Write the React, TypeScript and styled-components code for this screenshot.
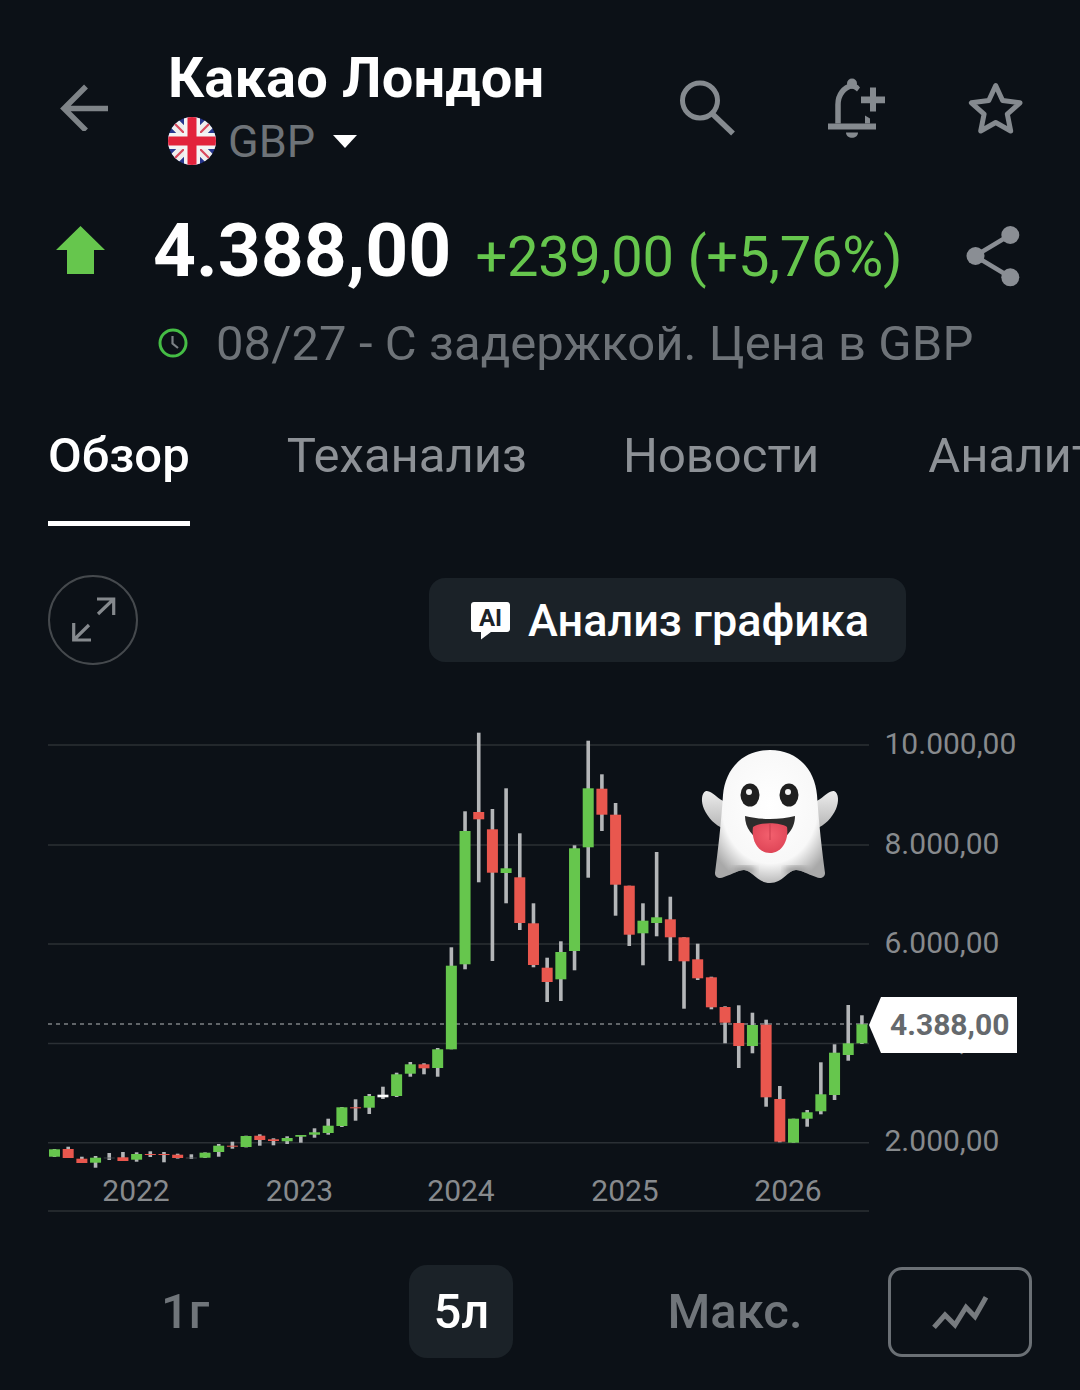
import React from 'react'
import styled, { createGlobalStyle } from 'styled-components'

type Tone = 'g' | 'r' | 'w' | 'd'

// wick top, wick bottom, body top, body bottom, tone (screen px, the chart viewBox uses page coordinates)
const candles: [number, number, number, number, Tone][] = [
  [1149, 1157, 1149.3, 1156.7, 'g'],
  [1146.7, 1158, 1149, 1158, 'r'],
  [1156.7, 1163, 1158.7, 1163, 'r'],
  [1156, 1167.7, 1157.7, 1162.7, 'g'],
  [1153, 1160, 1157.6, 1158.4, 'd'],
  [1152, 1161, 1157.3, 1161, 'r'],
  [1152.3, 1161.7, 1154, 1159.7, 'g'],
  [1151.3, 1157, 1154, 1155, 'r'],
  [1152, 1162.3, 1154, 1155, 'r'],
  [1153.7, 1158.6, 1154.7, 1158, 'r'],
  [1154.3, 1159, 1157.6, 1158.4, 'd'],
  [1152.4, 1158, 1152.7, 1157.7, 'g'],
  [1144, 1156.7, 1145.7, 1152, 'g'],
  [1141.7, 1148.7, 1145.7, 1146.7, 'r'],
  [1135.7, 1147.4, 1136, 1147, 'g'],
  [1134.3, 1145.7, 1135.7, 1140, 'r'],
  [1138.3, 1145.3, 1139.3, 1141, 'r'],
  [1136.3, 1144, 1138, 1141.3, 'g'],
  [1135, 1142.7, 1135, 1136.7, 'g'],
  [1128.3, 1137.7, 1132.3, 1134.7, 'g'],
  [1118.7, 1134.7, 1125.7, 1133, 'g'],
  [1107, 1127, 1107.3, 1126, 'g'],
  [1099.3, 1120.7, 1107.3, 1108.3, 'r'],
  [1094, 1114, 1096, 1107.7, 'g'],
  [1086.7, 1099, 1094.7, 1097.3, 'w'],
  [1072.7, 1097, 1074.3, 1096, 'g'],
  [1062, 1076.7, 1064.3, 1073.7, 'g'],
  [1063.3, 1074.3, 1064.3, 1068.3, 'r'],
  [1048, 1076.7, 1049.3, 1068, 'g'],
  [947.3, 1049.3, 965.7, 1049.3, 'g'],
  [811.3, 969.3, 831, 964.3, 'g'],
  [732.7, 882.3, 812, 819.3, 'r'],
  [809, 961, 829.3, 872.7, 'r'],
  [788.3, 903.3, 868.3, 873, 'g'],
  [833.3, 930, 877.3, 923, 'r'],
  [903.3, 967.3, 923.3, 965, 'r'],
  [957.7, 1002, 967.7, 982, 'r'],
  [941.3, 1001, 952, 979.3, 'g'],
  [845.3, 970.3, 848.3, 951, 'g'],
  [740.7, 877.7, 788.3, 847.3, 'g'],
  [774.3, 831, 788.7, 814.7, 'r'],
  [803, 915.7, 814.7, 884.7, 'r'],
  [885.7, 946, 885.7, 934.7, 'r'],
  [903.3, 965.3, 920.7, 933.3, 'g'],
  [852, 936.3, 917.3, 923, 'g'],
  [896.7, 961, 919.3, 937.3, 'r'],
  [937.3, 1008.7, 937.3, 961.3, 'r'],
  [943.7, 980, 959.3, 978.3, 'r'],
  [976.7, 1009.3, 977.3, 1007.3, 'r'],
  [1006.3, 1043.3, 1007, 1022.7, 'r'],
  [1005.3, 1068, 1023, 1046, 'r'],
  [1012.7, 1053.3, 1025, 1046, 'g'],
  [1019.7, 1106.7, 1024.7, 1097.3, 'r'],
  [1086, 1142.3, 1099, 1141.7, 'r'],
  [1118.7, 1142.7, 1118.7, 1142.7, 'g'],
  [1110, 1126.7, 1112.3, 1118.7, 'g'],
  [1062.3, 1114.3, 1094.3, 1111.3, 'g'],
  [1044.3, 1100, 1052.7, 1095, 'g'],
  [1005, 1060.7, 1043.3, 1055, 'g'],
  [1015.3, 1044, 1024.3, 1043.3, 'g'],
]

const toneColor: Record<Tone, string> = {
  g: '#66c64d',
  r: '#e9574e',
  w: '#ffffff',
  d: '#4a4f54',
}

const gridLines = [745, 845, 944, 1043.5, 1142.7, 1211]
const yLabels: [string, number][] = [
  ['10.000,00', 754],
  ['8.000,00', 854],
  ['6.000,00', 953],
  ['4.000,00', 1050],
  ['2.000,00', 1151],
]
const xLabels: [string, number][] = [
  ['2022', 136],
  ['2023', 299.5],
  ['2024', 461],
  ['2025', 625],
  ['2026', 788],
]

const GlobalStyle = createGlobalStyle`
  html, body {
    margin: 0;
    padding: 0;
    background: #0c1117;
  }
  body {
    font-family: Roboto, "Liberation Sans", sans-serif;
  }
`

const Screen = styled.div`
  width: 1080px;
  height: 1390px;
  overflow: hidden;
  background: #0c1117;
`

const TopBar = styled.header`
  display: flex;
  align-items: center;
  height: 119px;
  padding: 46px 54px 0 58px;
`

const BackIcon = styled.svg`
  width: 50px;
  height: 50px;
  margin-right: 60px;
  flex: none;
`

const TitleBlock = styled.div`
  display: flex;
  flex-direction: column;
`

const Title = styled.h1`
  margin: 0;
  font-size: 56px;
  line-height: 64px;
  font-weight: 700;
  color: #fff;
  letter-spacing: 0.15px;
`

const Exchange = styled.div`
  display: flex;
  align-items: center;
  height: 48px;
  margin-top: 7px;
  font-size: 45px;
  color: #6e7378;
`

const FlagIcon = styled.svg`
  width: 48px;
  height: 48px;
  margin-right: 12px;
`

const Caret = styled.span`
  width: 0;
  height: 0;
  margin-left: 18px;
  border-left: 12px solid transparent;
  border-right: 12px solid transparent;
  border-top: 13px solid #fff;
`

const TopIcons = styled.div`
  display: flex;
  align-items: center;
  margin-left: auto;
`

const TopIcon = styled.svg<{ $gap?: number }>`
  width: 60px;
  height: 60px;
  margin-left: ${p => p.$gap || 0}px;
  overflow: visible;
`

const PriceRow = styled.div`
  display: flex;
  align-items: center;
  height: 100px;
  margin-top: 35px;
  padding: 0 54px 0 56px;
`

const UpArrow = styled.svg`
  width: 49px;
  height: 48px;
  margin-right: 48px;
  flex: none;
`

const PriceValues = styled.div`
  display: flex;
  align-items: baseline;
  white-space: nowrap;
`

const Price = styled.span`
  font-size: 75px;
  font-weight: 700;
  color: #fff;
`

const Change = styled.span`
  margin-left: 24px;
  font-size: 56px;
  color: #66c64d;
  letter-spacing: -0.25px;
`

const ShareIcon = styled.svg`
  width: 60px;
  height: 60px;
  margin-left: auto;
  overflow: visible;
`

const StatusRow = styled.div`
  display: flex;
  align-items: center;
  height: 60px;
  margin-top: 13px;
  padding-left: 158px;
  white-space: nowrap;
`

const ClockIcon = styled.svg`
  width: 30px;
  height: 30px;
  margin-right: 28px;
`

const StatusText = styled.span`
  font-size: 49px;
  color: #6e7378;
  letter-spacing: 0.07px;
`

const Tabs = styled.nav`
  display: flex;
  margin-top: 48px;
  padding-left: 48px;
  overflow: hidden;
  white-space: nowrap;
`

const Tab = styled.div<{ $active?: boolean; $gap?: number }>`
  height: 100px;
  line-height: 70px;
  margin-right: ${p => p.$gap || 0}px;
  font-size: 49px;
  font-weight: ${p => (p.$active ? 500 : 400)};
  color: ${p => (p.$active ? '#fff' : '#8d9196')};
  border-bottom: 5px solid ${p => (p.$active ? '#fff' : 'transparent')};
`

const Toolbar = styled.div`
  display: flex;
  align-items: center;
  height: 90px;
  margin-top: 49px;
  padding-left: 48px;
`

const ExpandButton = styled.div`
  display: flex;
  box-sizing: border-box;
  width: 90px;
  height: 90px;
  align-items: center;
  justify-content: center;
  border: 2.5px solid #45494d;
  border-radius: 50%;
`

const ExpandIcon = styled.svg`
  width: 50px;
  height: 50px;
`

const AiButton = styled.div`
  display: flex;
  align-items: center;
  height: 84px;
  width: 477px;
  box-sizing: border-box;
  margin-left: 291px;
  padding-left: 42px;
  background: #1b2228;
  border-radius: 16px;
  font-size: 45px;
  font-weight: 500;
  color: #fff;
  white-space: nowrap;
`

const AiIcon = styled.svg`
  width: 40px;
  height: 40px;
  margin-right: 17px;
`

const ChartArea = styled.div`
  position: relative;
  height: 500px;
  margin-top: 60px;
`

const ChartSvg = styled.svg`
  display: block;
  width: 1080px;
  height: 500px;
`

const AxisText = styled.text`
  font-family: Roboto, "Liberation Sans", sans-serif;
  font-size: 30px;
  fill: #878a8d;
`

const PriceTag = styled.div`
  position: absolute;
  left: 869px;
  top: 272px;
  display: flex;
  align-items: center;
  box-sizing: border-box;
  width: 148px;
  height: 56px;
  padding: 0 0 2px 21px;
  background: #fff;
  clip-path: polygon(0 50%, 12px 0, 100% 0, 100% 100%, 12px 100%);
  font-size: 30px;
  font-weight: 700;
  color: #65696d;
`

const Ghost = styled.svg`
  position: absolute;
  left: 700px;
  top: 23px;
  width: 140px;
  height: 138px;
`

const RangeRow = styled.div`
  display: flex;
  align-items: center;
  height: 93px;
  margin-top: 40px;
  padding-left: 161px;
`

const RangeItem = styled.div<{ $active?: boolean; $gap?: number }>`
  display: flex;
  align-items: center;
  justify-content: center;
  box-sizing: border-box;
  height: 93px;
  width: ${p => (p.$active ? '104px' : 'auto')};
  margin-left: ${p => p.$gap || 0}px;
  border-radius: 18px;
  background: ${p => (p.$active ? '#1b2228' : 'transparent')};
  font-size: 49px;
  font-weight: 500;
  color: ${p => (p.$active ? '#fff' : '#70757a')};
`

const ChartTypeButton = styled.div`
  display: flex;
  align-items: center;
  justify-content: center;
  box-sizing: border-box;
  width: 144px;
  height: 90px;
  margin-left: 85px;
  border: 3px solid #6b7075;
  border-radius: 14px;
`

const ChartTypeIcon = styled.svg`
  width: 60px;
  height: 40px;
`

function UkFlag() {
  return (
    <FlagIcon viewBox="0 0 48 48">
      <defs>
        <clipPath id="flagClip">
          <circle cx="24" cy="24" r="24" />
        </clipPath>
      </defs>
      <g clipPath="url(#flagClip)">
        <rect width="48" height="48" fill="#28378f" />
        <path d="M0 0L48 48M48 0L0 48" stroke="#eee" strokeWidth="11" />
        <path d="M0 0L24 24M48 0L24 24M0 48L24 24M48 48L24 24" stroke="#d9485c" strokeWidth="2.2" />
        <rect x="16" width="16" height="48" fill="#f4f4f4" />
        <rect y="16" width="48" height="16" fill="#f4f4f4" />
        <rect x="19.5" width="9" height="48" fill="#e2233b" />
        <rect y="19.5" width="48" height="9" fill="#e2233b" />
      </g>
    </FlagIcon>
  )
}

function GhostEmoji() {
  return (
    <Ghost viewBox="700 748 140 138">
      <defs>
        <radialGradient id="ghostBody" cx="50%" cy="42%" r="62%">
          <stop offset="0%" stopColor="#ffffff" />
          <stop offset="70%" stopColor="#f8f8f8" />
          <stop offset="100%" stopColor="#a9a9a9" />
        </radialGradient>
        <linearGradient id="ghostArm" x1="0" y1="0" x2="0" y2="1">
          <stop offset="0%" stopColor="#ededed" />
          <stop offset="100%" stopColor="#b5b5b5" />
        </linearGradient>
        <radialGradient id="ghostTongue" cx="50%" cy="40%" r="65%">
          <stop offset="0%" stopColor="#f3606e" />
          <stop offset="100%" stopColor="#dd4355" />
        </radialGradient>
        <filter id="ghostSoft">
          <feGaussianBlur stdDeviation="3" />
        </filter>
        <clipPath id="ghostClip">
          <path d="M770 750C742 750 725 770 723 795C721 825 718 850 715 873C715 878 720 879 724 877C733 874 738 870 744 870C752 870 757 883 770 883C783 883 788 870 796 870C802 870 807 874 816 877C820 879 825 878 825 873C822 850 819 825 817 795C815 770 798 750 770 750Z" />
        </clipPath>
      </defs>
      <path d="M726 802C718 800 712 790 706 791C701 793 701 802 704 809C708 818 715 825 724 829Z" fill="url(#ghostArm)" />
      <path d="M814 802C822 800 828 790 834 791C839 793 839 802 836 809C832 818 825 825 816 829Z" fill="url(#ghostArm)" />
      <path
        d="M770 750C742 750 725 770 723 795C721 825 718 850 715 873C715 878 720 879 724 877C733 874 738 870 744 870C752 870 757 883 770 883C783 883 788 870 796 870C802 870 807 874 816 877C820 879 825 878 825 873C822 850 819 825 817 795C815 770 798 750 770 750Z"
        fill="url(#ghostBody)"
      />
      <g clipPath="url(#ghostClip)">
        <ellipse cx="744" cy="871" rx="12" ry="5" fill="#9c9c9c" filter="url(#ghostSoft)" />
        <ellipse cx="796" cy="871" rx="12" ry="5" fill="#9c9c9c" filter="url(#ghostSoft)" />
      </g>
      <ellipse cx="750" cy="795" rx="9.5" ry="11.5" fill="#1f1f1f" />
      <ellipse cx="789" cy="795" rx="9.5" ry="11.5" fill="#1f1f1f" />
      <circle cx="749" cy="792" r="3" fill="#f2f2f2" />
      <circle cx="788" cy="792" r="3" fill="#f2f2f2" />
      <path d="M745 816C760 820 780 820 795 816C795 830 785 840 770 845C755 840 745 830 745 816Z" fill="#2c2c2c" />
      <path d="M753 827C760 822 780 822 787 827C789 840 782 853 770 853C758 853 751 840 753 827Z" fill="url(#ghostTongue)" />
      <path d="M770 824V840" stroke="#c93c4c" strokeWidth="1" />
    </Ghost>
  )
}

export default function App() {
  return (
    <Screen>
      <GlobalStyle />
      <TopBar>
        <BackIcon viewBox="58 80.5 50 50" fill="none" stroke="#7f8488" strokeWidth="5.5">
          <path d="M108 108H65M86 86L64 108L86 130" />
        </BackIcon>
        <TitleBlock>
          <Title>Какао Лондон</Title>
          <Exchange>
            <UkFlag />
            GBP
            <Caret />
          </Exchange>
        </TitleBlock>
        <TopIcons>
          <TopIcon viewBox="678 75.5 60 60" fill="none" stroke="#858a8f" strokeWidth="5">
            <circle cx="700" cy="100" r="17.5" />
            <path d="M712 113L733 133" strokeWidth="5.5" />
          </TopIcon>
          <TopIcon $gap={88} viewBox="826 75.5 60 60" fill="#858a8f">
            <path d="M828 123H876V129H828Z" />
            <path d="M846 132H858C858 139 846 139 846 132Z" />
            <circle cx="852" cy="83" r="5" />
            <path d="M838 123V104C838 94 844 87 852 85M859 87" fill="none" stroke="#858a8f" strokeWidth="5.5" />
            <path d="M852 82.5C855 83 858 84 860 87L857 91C855 89 853 88 851 88Z" />
            <path d="M865 115L870 118V123H865Z" />
            <path d="M870 87H876V96H885V102.7H876V111H870V102.7H861V96H870Z" />
          </TopIcon>
          <TopIcon $gap={80} viewBox="966 75.5 60 60" fill="none" stroke="#858a8f" strokeWidth="5" strokeLinejoin="round">
            <path d="M995.7 85L1002.6 100L1020 102.3L1007.3 113.6L1010.7 130.5L995.7 122L980.7 130.5L984.1 113.6L971.4 102.3L988.8 100Z" />
          </TopIcon>
        </TopIcons>
      </TopBar>

      <PriceRow>
        <UpArrow viewBox="0 0 49 48" fill="#66c64d">
          <path d="M24.5 0L49 24H38V48H11V24H0Z" />
        </UpArrow>
        <PriceValues>
          <Price>4.388,00</Price>
          <Change>+239,00 (+5,76%)</Change>
        </PriceValues>
        <ShareIcon viewBox="966 220 60 60" fill="#8a8e94" stroke="#8a8e94">
          <path d="M1010 235L975 256L1010 277" fill="none" strokeWidth="4.5" />
          <circle cx="1010.3" cy="235" r="9" strokeWidth="0" />
          <circle cx="975.5" cy="256" r="9" strokeWidth="0" />
          <circle cx="1010.3" cy="277.3" r="9" strokeWidth="0" />
        </ShareIcon>
      </PriceRow>

      <StatusRow>
        <ClockIcon viewBox="0 0 30 30" fill="none" stroke="#45bd45" strokeWidth="3">
          <circle cx="15" cy="15" r="13" />
          <path d="M14.5 8V15.5L20 20" strokeWidth="2.2" stroke="#7d8287" />
        </ClockIcon>
        <StatusText>08/27 - С задержкой. Цена в GBP</StatusText>
      </StatusRow>

      <Tabs>
        <Tab $active $gap={97}>Обзор</Tab>
        <Tab $gap={96}>Теханализ</Tab>
        <Tab $gap={109}>Новости</Tab>
        <Tab>Аналитика</Tab>
      </Tabs>

      <Toolbar>
        <ExpandButton>
          <ExpandIcon viewBox="67 595 50 50" fill="none" stroke="#85898d" strokeWidth="3.2">
            <path d="M96 599H112.7V615M112.7 599L97 614" />
            <path d="M72.7 623V640H90M72.7 640L88 625" />
          </ExpandIcon>
        </ExpandButton>
        <AiButton>
          <AiIcon viewBox="0 0 40 40">
            <path d="M3 2H36C37.7 2 39 3.3 39 5V29C39 30.7 37.7 32 36 32H20L10 39.5V32H3C1.3 32 0 30.7 0 29V5C0 3.3 1.3 2 3 2Z" fill="#fff" />
            <text x="19.5" y="26" textAnchor="middle" fontFamily="Roboto, sans-serif" fontWeight="700" fontSize="24" fill="#1b2228">AI</text>
          </AiIcon>
          Анализ графика
        </AiButton>
      </Toolbar>

      <ChartArea>
        <ChartSvg viewBox="0 725 1080 500">
          {gridLines.map(y => (
            <line key={y} x1="48" x2="869" y1={y} y2={y} stroke="#2b3035" strokeWidth="1.6" />
          ))}
          <line x1="48" x2="869" y1="1024" y2="1024" stroke="#7d8185" strokeWidth="1.4" strokeDasharray="4 4" />
          {candles.map(([wickTop, wickBottom, bodyTop, bodyBottom, tone], i) => {
            const x = 54.5 + i * 13.685
            return (
              <g key={i}>
                <rect x={x - 1.8} y={wickTop} width="3.6" height={wickBottom - wickTop} fill="#b4b6b8" />
                <rect x={x - 5.5} y={bodyTop} width="11" height={bodyBottom - bodyTop} fill={toneColor[tone]} />
              </g>
            )
          })}
          {yLabels.map(([label, y]) => (
            <AxisText key={label} x="884.5" y={y}>{label}</AxisText>
          ))}
          {xLabels.map(([label, x]) => (
            <AxisText key={label} x={x} y="1201" textAnchor="middle">{label}</AxisText>
          ))}
        </ChartSvg>
        <GhostEmoji />
        <PriceTag>4.388,00</PriceTag>
      </ChartArea>

      <RangeRow>
        <RangeItem>1г</RangeItem>
        <RangeItem $active $gap={200}>5л</RangeItem>
        <RangeItem $gap={154}>Макс.</RangeItem>
        <ChartTypeButton>
          <ChartTypeIcon viewBox="930 1292 60 40" fill="none" stroke="#777b7f" strokeWidth="5">
            <path d="M934 1327.3L945 1315L955 1325L966 1307.3L975 1316.7L986 1297.3" />
          </ChartTypeIcon>
        </ChartTypeButton>
      </RangeRow>
    </Screen>
  )
}
